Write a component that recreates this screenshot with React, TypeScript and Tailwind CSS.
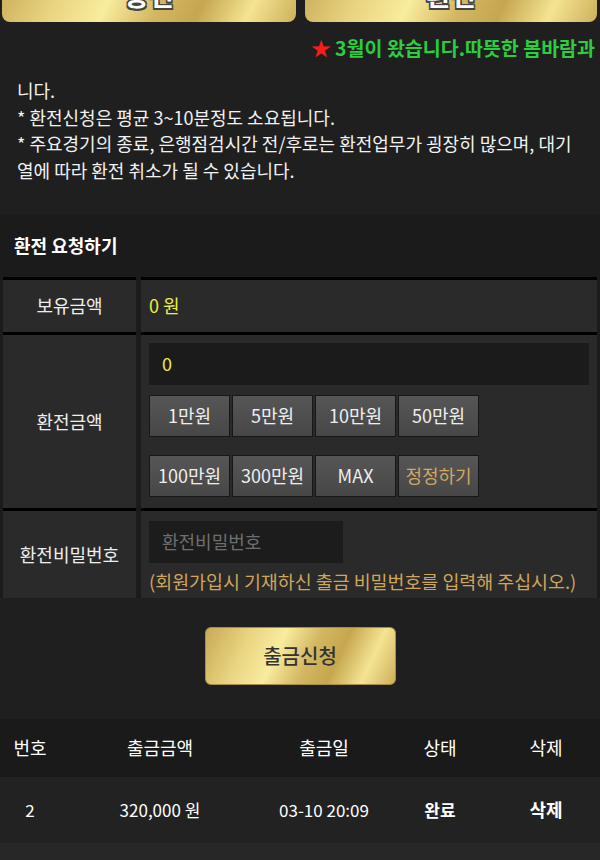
import React from "react";

const gold =
  "bg-[linear-gradient(115deg,#c8aa55_0%,#e9d582_22%,#f8ec9e_38%,#d2b661_55%,#c6a74f_68%,#f4e493_84%,#cdb05a_100%)]";

function AmountBtn({ label, accent }: { label: string; accent?: boolean }) {
  return (
    <div
      className={`w-[81px] h-[42px] flex items-center justify-center border border-[#171717] bg-[linear-gradient(180deg,#565656_0%,#474747_100%)] text-[18px] ${
        accent ? "text-[#d1a862]" : "text-[#eeeeee]"
      }`}
    >
      {label}
    </div>
  );
}

export default function App() {
  return (
    <div
      className="w-[600px] h-[860px] overflow-hidden bg-[#1f1f1f] text-[#eeeeee]"
      style={{ fontFamily: '"Noto Sans CJK KR", "Noto Sans", sans-serif' }}
    >
      {/* top buttons, cut off */}
      <div className="grid grid-cols-[294px_292px] gap-[9px] pl-[2px] -mt-[32px]">
        {["충전", "환전"].map((t) => (
          <div
            key={t}
            className={`h-[54px] rounded-[8px] ${gold} flex items-center justify-center text-[27px] font-bold text-white [text-shadow:-1.5px_-1.5px_0_#444,1.5px_-1.5px_0_#444,-1.5px_1.5px_0_#444,1.5px_1.5px_0_#444,0_2px_0_#444]`}
          >
            {t}
          </div>
        ))}
      </div>

      {/* marquee */}
      <div className="mt-[13px] h-[26px] flex justify-end pr-[5px] whitespace-nowrap text-[19.5px] leading-[26px] font-semibold">
        <span className="text-[#ff1a1a]">★</span>
        <span className="text-[#2ecc40]">&nbsp;3월이 왔습니다.따뜻한 봄바람과</span>
      </div>

      {/* notice */}
      <div className="mt-[16px] px-[17px] text-[18px] leading-[26.7px] whitespace-nowrap text-[#f2f2f2]">
        니다.
        <br />* 환전신청은 평균 3~10분정도 소요됩니다.
        <br />* 주요경기의 종료, 은행점검시간 전/후로는 환전업무가 굉장히 많으며, 대기
        <br />
        열에 따라 환전 취소가 될 수 있습니다.
      </div>

      {/* request section */}
      <div className="mt-[31px] bg-[#1b1b1b]">
        <div className="h-[62px] flex items-center pl-[14px] text-[18px] font-bold text-white">
          환전 요청하기
        </div>
        <div className="grid grid-cols-[133px_1fr] gap-x-[5px] pl-[3px] pr-[3px]">
          {/* row 1 */}
          <div className="border-t-[3px] border-black bg-[#2a2a2a] h-[55px] flex items-center justify-center text-[18px]">
            보유금액
          </div>
          <div className="border-t-[3px] border-black bg-[#2a2a2a] h-[55px] flex items-center pl-[8px] text-[18px] text-[#eeee44]">
            0 원
          </div>
          {/* row 2 */}
          <div className="border-t-[3px] border-black bg-[#2a2a2a] h-[176px] flex items-center justify-center text-[18px]">
            환전금액
          </div>
          <div className="border-t-[3px] border-black bg-[#2a2a2a] h-[176px] pt-[8px] pl-[8px] pr-[8px]">
            <div className="h-[42px] bg-[#1b1b1b] flex items-center pl-[13px] text-[18px] text-[#eeee44]">
              0
            </div>
            <div className="mt-[10px] flex gap-[2px]">
              <AmountBtn label="1만원" />
              <AmountBtn label="5만원" />
              <AmountBtn label="10만원" />
              <AmountBtn label="50만원" />
            </div>
            <div className="mt-[18px] flex gap-[2px]">
              <AmountBtn label="100만원" />
              <AmountBtn label="300만원" />
              <AmountBtn label="MAX" />
              <AmountBtn label="정정하기" accent />
            </div>
          </div>
          {/* row 3 */}
          <div className="border-t-[3px] border-black bg-[#2a2a2a] h-[90px] flex items-center justify-center text-[18px]">
            환전비밀번호
          </div>
          <div className="border-t-[3px] border-black bg-[#2a2a2a] h-[90px] pt-[10px] pl-[8px]">
            <div className="w-[194px] h-[42px] bg-[#1c1c1c] flex items-center pl-[13px] text-[18px] text-[#6e6e6e]">
              환전비밀번호
            </div>
            <div className="mt-[6px] text-[18.4px] leading-[24px] text-[#d0a55c] whitespace-nowrap">
              (회원가입시 기재하신 출금 비밀번호를 입력해 주십시오.)
            </div>
          </div>
        </div>
      </div>

      {/* submit */}
      <div className="pt-[29px] flex justify-center">
        <div
          className={`w-[191px] h-[58px] rounded-[6px] ${gold} border border-[#a88f45] flex items-center justify-center text-[20px] font-medium text-[#333333]`}
        >
          출금신청
        </div>
      </div>

      {/* history table */}
      <div className="mt-[34px]">
        <div className="h-[58px] bg-[#1a1a1a] grid grid-cols-[60px_200px_128px_104px_108px] items-center text-center text-[18px] text-white">
          <div>번호</div>
          <div>출금금액</div>
          <div>출금일</div>
          <div>상태</div>
          <div>삭제</div>
        </div>
        <div className="h-[66px] bg-[#222222] grid grid-cols-[60px_200px_128px_104px_108px] items-center text-center text-[17px] text-white">
          <div>2</div>
          <div>320,000 원</div>
          <div>03-10 20:09</div>
          <div className="font-bold">완료</div>
          <div className="font-bold text-[18px]">삭제</div>
        </div>
        <div className="h-[40px] bg-[#272727]" />
      </div>
    </div>
  );
}
